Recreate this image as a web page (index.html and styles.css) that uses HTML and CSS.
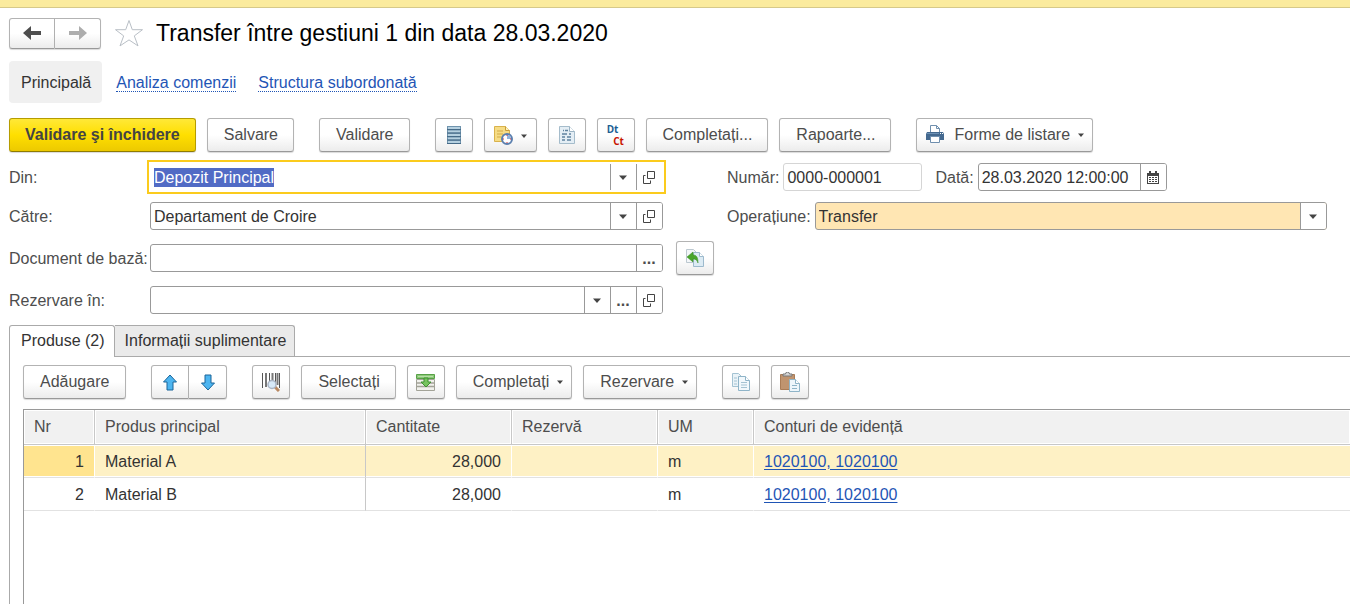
FILE: index.html
```html
<!DOCTYPE html>
<html lang="ro">
<head>
    <meta charset="UTF-8">
    <meta name="viewport" content="width=device-width, initial-scale=1.0">
    <title>Transfer între gestiuni 1 din data 28.03.2020</title>
    <link rel="stylesheet" href="styles.css">
</head>
<body>
    <!-- shared icons -->
    <svg class="sprite" width="0" height="0" aria-hidden="true">
        <symbol id="arrow" viewBox="0 0 8 5"><path d="M0 .5h8L4 5z" fill="#444"/></symbol>
        <symbol id="open" viewBox="0 0 12 13"><path d="M4.500 .5h7v7h-7z M2.500 4.500h-2v8h7v-3" fill="none" stroke="#444"/></symbol>
    </svg>

    <div class="top-strip"></div>

    <header class="header">
        <div class="btn-group history">
            <button class="btn" type="button" aria-label="Înapoi">
                <svg width="18" height="14" viewBox="0 0 18 14"><path d="M8 0v5h10v4H8v5L0 7z" fill="#4d4d4d"/></svg>
            </button>
            <button class="btn" type="button" aria-label="Înainte">
                <svg width="18" height="14" viewBox="0 0 18 14"><path d="M10 0v5H0v4h10v5l8-7z" fill="#adadad"/></svg>
            </button>
        </div>
        <button class="star" type="button" aria-label="Favorite">
            <svg width="30" height="28" viewBox="0 0 30 28"><path d="M15 1.500l3.300 9.200h10.200l-8.200 6.200 3.700 10-9-6-9 6 3.700-10-8.200-6.200h10.200z" fill="#fff" stroke="#b9bfc6"/></svg>
        </button>
        <h1>Transfer între gestiuni 1 din data 28.03.2020</h1>
    </header>

    <nav class="nav">
        <span class="nav-current">Principală</span>
        <a href="#">Analiza comenzii</a>
        <a href="#">Structura subordonată</a>
    </nav>

    <div class="toolbar main-toolbar">
        <button class="btn btn-primary" type="button">Validare şi închidere</button>
        <button class="btn" type="button">Salvare</button>
        <button class="btn group-start" type="button">Validare</button>
        <button class="btn btn-icon group-start" type="button" aria-label="Registru">
            <svg width="14" height="18" viewBox="0 0 14 18">
                <path d="M0 0h14v18H0z" fill="#6f93ad"/>
                <path d="M1 1h12v2H1zM1 4.500h12v2H1zM1 8h12v2H1zM1 11.500h12v2H1zM1 15h12v2H1z" fill="#b5d0e0"/>
                <path d="M0 3.500h14M0 7h14M0 10.500h14M0 14h14M0 17.500h14" stroke="#466b88"/>
            </svg>
        </button>
        <button class="btn btn-icon btn-menu" type="button" aria-label="Sarcini">
            <svg width="19" height="19" viewBox="0 0 19 19">
                <path d="M.5.5h11l4 4v11H.5z" fill="#f6dc84" stroke="#d9b24c"/>
                <path d="M11.500.5v4h4" fill="#fff2bd" stroke="#c79d3a"/>
                <path d="M3 5h6M3 8h6M3 11h4" stroke="#d2ab47"/>
                <circle cx="13" cy="13" r="5" fill="#fff" stroke="#5b7fae" stroke-width="2"/>
                <path d="M13 13V9a4 4 0 0 1 4 4z" fill="#8fb3dc"/>
                <path d="M13 9v1M13 16v1M9 13h1M16 13h1" stroke="#d33"/>
            </svg>
            <svg class="caret" width="6" height="4"><use href="#arrow"/></svg>
        </button>
        <button class="btn btn-icon" type="button" aria-label="Raport document">
            <svg width="16" height="18" viewBox="0 0 16 18">
                <path d="M.5.5h10l5 5v12H.5z" fill="#e4eef5" stroke="#a5bccb"/>
                <path d="M10.500.5v5h5" fill="#fff" stroke="#9ab3c4"/>
                <path d="M4 4.500h1M6 4.500h3M3 8h5M3 11h3M3 14h3M8 11h4M8 14h4M10 8h2" stroke="#5f83a0" stroke-width="1.500"/>
            </svg>
        </button>
        <button class="btn btn-icon dtct" type="button"><span class="dt">Dt</span><span class="ct">Ct</span></button>
        <button class="btn" type="button">Completați...</button>
        <button class="btn" type="button">Rapoarte...</button>
        <button class="btn btn-print group-start" type="button">
            <svg width="18" height="18" viewBox="0 0 18 18">
                <path d="M4.500 8V.5h6l3 3V8" fill="#fff" stroke="#6f8fae"/>
                <path d="M10.500.5v3h3" fill="none" stroke="#6f8fae"/>
                <path d="M1 7h16l1 2v6H0V9z" fill="#44698f"/>
                <path d="M1 8.500h12" stroke="#6d91b5"/>
                <path d="M14 8.500h1M16 8.500h1" stroke="#fff"/>
                <path d="M4.500 11.500h9v6h-9z" fill="#fff" stroke="#6f8fae"/>
            </svg>
            Forme de listare
            <svg class="caret" width="6" height="4"><use href="#arrow"/></svg>
        </button>
    </div>

    <form class="form">
        <div class="column">
            <div class="form-row tight">
                <label for="from">Din:</label>
                <div class="field focused">
                    <input type="text" id="from" value="Depozit Principal">
                    <button type="button" aria-label="Alege"><svg width="8" height="5"><use href="#arrow"/></svg></button>
                    <button type="button" aria-label="Deschide"><svg width="12" height="13"><use href="#open"/></svg></button>
                </div>
            </div>
            <div class="form-row">
                <label for="to">Către:</label>
                <div class="field">
                    <input type="text" id="to" value="Departament de Croire">
                    <button type="button" aria-label="Alege"><svg width="8" height="5"><use href="#arrow"/></svg></button>
                    <button type="button" aria-label="Deschide"><svg width="12" height="13"><use href="#open"/></svg></button>
                </div>
            </div>
            <div class="form-row">
                <label for="base">Document de bază:</label>
                <div class="field">
                    <input type="text" id="base">
                    <button type="button">...</button>
                </div>
                <button class="btn btn-icon" type="button" aria-label="Completează din document">
                    <svg width="18" height="18" viewBox="0 0 18 18">
                        <path d="M.5.5h7l3 3v10H.5z" fill="#f3f6f8" stroke="#bcc8d0"/>
                        <path d="M7.500 3.500h6l4 4v10h-10z" fill="#dcebf4" stroke="#9dbacd"/>
                        <path d="M13.500 3.500v4h4" fill="#fff" stroke="#9dbacd"/>
                        <path d="M1 8l6-5v3c4 0 5 3 5 8-1-3-2-4-5-4v3z" fill="#4aa52c" stroke="#348a1c" stroke-width=".5"/>
                    </svg>
                </button>
            </div>
            <div class="form-row">
                <label for="reserve">Rezervare în:</label>
                <div class="field">
                    <input type="text" id="reserve">
                    <button type="button" aria-label="Alege"><svg width="8" height="5"><use href="#arrow"/></svg></button>
                    <button type="button">...</button>
                    <button type="button" aria-label="Deschide"><svg width="12" height="13"><use href="#open"/></svg></button>
                </div>
            </div>
        </div>

        <div class="column">
            <div class="form-row tight">
                <label for="number">Număr:</label>
                <div class="field number"><input type="text" id="number" value="0000-000001"></div>
                <label for="date">Dată:</label>
                <div class="field date">
                    <input type="text" id="date" value="28.03.2020 12:00:00">
                    <button type="button" aria-label="Calendar">
                        <svg width="12" height="13" viewBox="0 0 12 13">
                            <path d="M0 2h12v11H0z" fill="#444"/>
                            <path d="M3 0v3M9 0v3" stroke="#444" stroke-width="2"/>
                            <path d="M1 5h10v7H1z" fill="#fff"/>
                            <path d="M2 6.500h8M2 8.500h8M2 10.500h8" stroke="#444" stroke-dasharray="2 1"/>
                        </svg>
                    </button>
                </div>
            </div>
            <div class="form-row">
                <label for="operation">Operațiune:</label>
                <div class="field operation">
                    <select id="operation"><option>Transfer</option></select>
                    <span class="select-arrow"><svg width="8" height="5"><use href="#arrow"/></svg></span>
                </div>
            </div>
        </div>
    </form>

    <div class="tabs" role="tablist">
        <button class="tab active" type="button" role="tab" aria-selected="true">Produse (2)</button>
        <button class="tab" type="button" role="tab" aria-selected="false">Informații suplimentare</button>
    </div>

    <main class="panel">
        <div class="toolbar">
            <button class="btn btn-add" type="button">Adăugare</button>
            <div class="btn-group group-start">
                <button class="btn btn-icon" type="button" aria-label="Mută în sus">
                    <svg width="16" height="17" viewBox="0 0 16 17"><path d="M8 1l6.500 7H11v8H5V8H1.500z" fill="#4db5f0" stroke="#1b6599"/></svg>
                </button>
                <button class="btn btn-icon" type="button" aria-label="Mută în jos">
                    <svg width="16" height="17" viewBox="0 0 16 17"><path d="M8 16l6.500-7H11V1H5v8H1.500z" fill="#4db5f0" stroke="#1b6599"/></svg>
                </button>
            </div>
            <button class="btn btn-icon group-start" type="button" aria-label="Cod de bare">
                <svg width="18" height="20" viewBox="0 0 18 20">
                    <path d="M.5 1v15M7.500 1v11M13.500 1v10M17.500 1v15" stroke="#555"/>
                    <path d="M4 1v14M10.500 1v10M15.500 1v12" stroke="#777" stroke-width="2"/>
                    <path d="M13 15l4 4" stroke="#b98963" stroke-width="3"/>
                    <circle cx="10" cy="12.500" r="4" fill="#d7e9f8" stroke="#a9b4c4" stroke-width="1.500"/>
                </svg>
            </button>
            <button class="btn" type="button">Selectați</button>
            <button class="btn btn-icon" type="button" aria-label="Inserează rânduri">
                <svg width="19" height="17" viewBox="0 0 19 17">
                    <path d="M.5 5.500h18v11H.5z" fill="#f1f1ec" stroke="#a3a398"/>
                    <path d="M0 9h19M0 12.500h19" stroke="#a3a398" stroke-width="1.500"/>
                    <path d="M.5.500h18v4H.5z" fill="#8cc878" stroke="#57a147"/>
                    <path d="M8 4h4v4h3l-5 5-5-5h3z" fill="#76c35e" stroke="#3f9130"/>
                    <path d="M2 2.500h15" stroke="#b6e0a6"/>
                </svg>
            </button>
            <button class="btn btn-menu" type="button">Completați <svg class="caret" width="6" height="4"><use href="#arrow"/></svg></button>
            <button class="btn btn-menu" type="button">Rezervare <svg class="caret" width="6" height="4"><use href="#arrow"/></svg></button>
            <button class="btn btn-icon group-start" type="button" aria-label="Copiază">
                <svg width="18" height="18" viewBox="0 0 18 18">
                    <path d="M.5.5h6l3 3v10H.5z" fill="#eaf3f8" stroke="#a4c3d3"/>
                    <path d="M2 5h3M2 8h3M2 11h3" stroke="#a4c3d3"/>
                    <path d="M6.500 3.500h7l4 4v10h-11z" fill="#f1f8fc" stroke="#8fb4c8"/>
                    <path d="M13.500 3.500v4h4" fill="#fff" stroke="#8fb4c8"/>
                    <path d="M9 9.500h6M9 12h6M9 14.500h6" stroke="#a4c3d3"/>
                </svg>
            </button>
            <button class="btn btn-icon" type="button" aria-label="Lipește">
                <svg width="20" height="20" viewBox="0 0 20 20">
                    <path d="M.5 2.500h14v15H.5z" fill="#c0946f" stroke="#a97c57"/>
                    <path d="M3 4V2h2.500a2 2 0 0 1 4 0H12v2z" fill="#d5d5d5" stroke="#777"/>
                    <path d="M9.500 7.500h6l4 4v8h-10z" fill="#eef6fb" stroke="#8fb4c8"/>
                    <path d="M15.500 7.500v4h4" fill="#fff" stroke="#8fb4c8"/>
                    <path d="M12 13.500h5M12 16.500h5" stroke="#8fb4c8"/>
                </svg>
            </button>
        </div>

        <div class="table-box">
            <table>
                <colgroup>
                    <col class="col-nr"><col class="col-product"><col class="col-qty"><col class="col-qty"><col class="col-um"><col>
                </colgroup>
                <thead>
                    <tr><th>Nr</th><th>Produs principal</th><th>Cantitate</th><th>Rezervă</th><th>UM</th><th>Conturi de evidență</th></tr>
                </thead>
                <tbody>
                    <tr class="selected">
                        <td class="num">1</td><td class="product">Material A</td><td class="num">28,000</td><td></td><td>m</td><td><a href="#">1020100, 1020100</a></td>
                    </tr>
                    <tr>
                        <td class="num">2</td><td class="product">Material B</td><td class="num">28,000</td><td></td><td>m</td><td><a href="#">1020100, 1020100</a></td>
                    </tr>
                </tbody>
            </table>
        </div>
    </main>

    <script>
        const from = document.getElementById('from');
        from.focus();
        from.select();
    </script>
</body>
</html>
```
FILE: styles.css
```css
* {
    box-sizing: border-box;
}
body {
    display: flex;
    flex-direction: column;
    min-height: 100vh;
    margin: 0;
    font-family: "Liberation Sans", Arial, sans-serif;
    font-size: 16px;
    line-height: 19px;
    color: #4d4d4d;
    background: #fff;
}
button, input, select {
    font: inherit;
    color: inherit;
}
svg {
    display: block;
    flex: none;
}
.sprite {
    position: absolute;
}
.top-strip {
    height: 8px;
    background: #fbeb9e;
    border-bottom: 1px solid #d6c98a;
}

/* header */
.header {
    display: flex;
    align-items: center;
    height: 50px;
    padding: 0 9px;
}
.header h1 {
    margin: 0 0 0 12px;
    font-size: 23px;
    line-height: 28px;
    font-weight: normal;
    color: #000;
}
.star {
    margin-left: 13px;
    padding: 0;
    border: none;
    background: none;
}
.nav {
    display: flex;
    align-items: center;
    height: 42px;
    margin: 3px 9px 15px;
}
.nav-current {
    padding: 12px 11px 11px 12px;
    margin-right: 14px;
    border-radius: 4px;
    color: #333;
    background: #f0f0f0;
}
.nav a {
    margin-right: 22px;
    padding-top: 2px;
    line-height: 16px;
    color: #1f55b5;
    text-decoration: none;
    border-bottom: 1px dotted #1f55b5;
}

/* buttons */
.btn {
    display: flex;
    align-items: center;
    justify-content: center;
    height: 34px;
    padding: 0 15px 2px 16px;
    border: 1px solid #b3b3b3;
    border-bottom-color: #999;
    border-radius: 3px;
    background: linear-gradient(#fff 50%, #ececec);
    box-shadow: 0 1px 1px rgba(0, 0, 0, 0.15);
    white-space: nowrap;
    flex: none;
}
.btn-primary {
    padding-left: 15px;
    font-weight: bold;
    color: #444;
    border-color: #b59c00;
    border-bottom-color: #8f7b00;
    background: linear-gradient(#ffe838, #ffdf00 50%, #ecc900);
}
.btn-add {
    padding-right: 16px;
}
.btn-icon {
    width: 38px;
    padding: 0;
}
.btn-menu {
    padding-right: 8px;
}
.btn-icon.btn-menu {
    width: 53px;
    padding: 0;
}
.btn-print {
    gap: 10px;
    padding: 0 8px 2px 9px;
}
.btn-print .caret {
    margin-left: -2px;
}
.caret {
    margin-top: 2px;
    margin-left: 8px;
}
.btn-group {
    display: flex;
}
.btn-group .btn:first-child {
    border-radius: 3px 0 0 3px;
}
.btn-group .btn:last-child {
    border-left: none;
    border-radius: 0 3px 3px 0;
}
.history .btn {
    width: 46px;
    height: 31px;
    padding: 0;
}
.toolbar {
    display: flex;
    gap: 11px;
}
.toolbar .group-start {
    margin-left: 14px;
}
.main-toolbar {
    padding: 0 9px;
}
.dtct {
    flex-direction: column;
    font-family: "Open Sans", "Noto Sans", sans-serif;
    font-size: 10px;
    line-height: 12px;
    font-weight: bold;
}
.dt {
    padding-right: 6px;
    color: #1d5f93;
}
.ct {
    padding-left: 6px;
    color: #c81400;
}

/* form */
.form {
    display: grid;
    grid-template-columns: 705fr 600fr;
    column-gap: 13px;
    padding: 8px 23px 0 9px;
}
.form-row {
    display: flex;
    align-items: center;
    height: 34px;
    margin-bottom: 8px;
}
.form-row.tight {
    margin-bottom: 5px;
}
.column:first-child .form-row {
    display: grid;
    grid-template-columns: 141px 1fr 51px;
}
.form-row label {
    white-space: nowrap;
}
.form-row .btn {
    margin-left: 13px;
}
.field {
    display: flex;
    height: 28px;
    border: 1px solid #999;
    border-radius: 3px;
    background: #fff;
    overflow: hidden;
}
.field.focused {
    border-color: #fff;
    border-radius: 0;
    outline: 2px solid #fbcb1d;
    outline-offset: 1px;
}
.field input, .field select {
    flex: 1;
    min-width: 0;
    padding: 0 3px;
    border: none;
    outline: none;
    color: #333;
    background: none;
}
.field select {
    appearance: none;
}
.field input::selection {
    color: #fff;
    background: rgba(79, 105, 196, 0.99);
}
.field button, .select-arrow {
    display: flex;
    align-items: center;
    justify-content: center;
    width: 26px;
    padding: 0 1px 0 0;
    border: none;
    border-left: 1px solid #999;
    font-weight: bold;
    background: #fff;
}
.number {
    width: 139px;
    margin: 0 13px 0 4px;
    border-color: #d5d5d5;
}
.date {
    width: 189px;
    margin-left: 4px;
}
.operation {
    flex: 1;
    margin-left: 4px;
    background: #ffe6b3;
}

/* tabs */
.tabs {
    display: flex;
    padding-left: 9px;
}
.tab {
    height: 31px;
    padding: 0 8px 1px 10px;
    border: 1px solid #aaa;
    border-left: none;
    border-bottom: none;
    border-radius: 0 3px 0 0;
    color: #333;
    background: #eaeaea;
}
.tab.active {
    height: 32px;
    margin-bottom: -1px;
    padding: 0 9px 2px 11px;
    border-left: 1px solid #aaa;
    border-radius: 3px 3px 0 0;
    background: #fff;
    z-index: 1;
}
.panel {
    display: flex;
    flex-direction: column;
    flex: 1;
    margin-left: 9px;
    padding: 8px 0 0 13px;
    border: solid #aaa;
    border-width: 1px 0 0 1px;
}

/* table */
.table-box {
    flex: 1;
    margin-top: 10px;
    border: solid #999;
    border-width: 1px 0 0 1px;
}
table {
    width: 100%;
    table-layout: fixed;
    border-collapse: separate;
    border-spacing: 0;
}
.col-nr {
    width: 71px;
}
.col-product {
    width: 271px;
}
.col-qty {
    width: 146px;
}
.col-um {
    width: 96px;
}
th {
    height: 35px;
    padding: 0 10px 2px;
    border-right: 1px solid #c8c8c8;
    border-bottom: 1px solid #c8c8c8;
    font-weight: normal;
    text-align: left;
    background: #f1f1f1;
    box-shadow: inset 0 0 0 1px #fff;
}
td {
    height: 33px;
    padding: 0 10px;
    border-right: 1px solid #fff;
    border-bottom: 1px solid #e2e2e2;
    color: #333;
}
th:last-child, td:last-child {
    border-right: none;
}
.product {
    border-right-color: #c8c8c8;
}
.num {
    text-align: right;
}
.selected td {
    background: #fef1c5;
    box-shadow: inset 0 1px #fff, inset 0 -1px #fff;
}
.selected td:first-child {
    background: #ffe48f;
}
td a {
    color: #1f55b5;
    text-underline-offset: 2px;
}
```
